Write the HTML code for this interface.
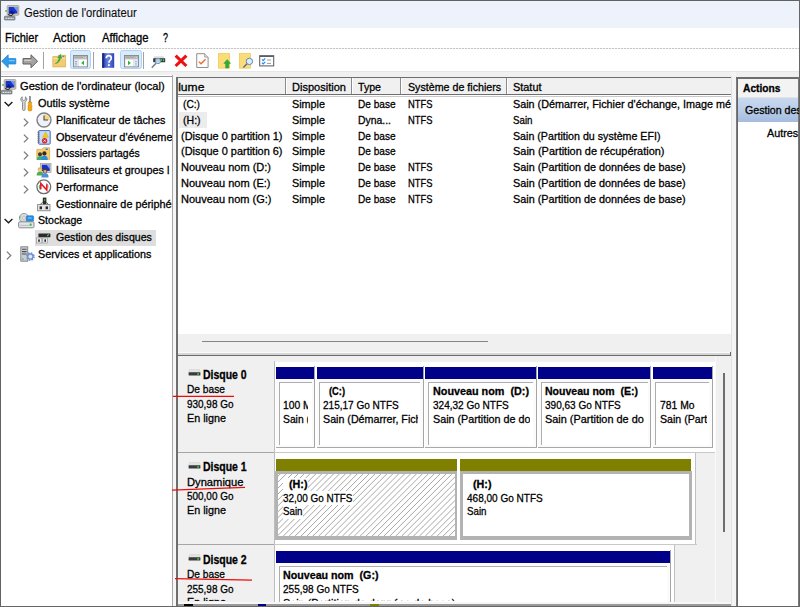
<!DOCTYPE html>
<html><head><meta charset="utf-8"><title>Gestion de l'ordinateur</title>
<style>
html,body{margin:0;padding:0;}
body{width:800px;height:607px;overflow:hidden;position:relative;background:#fff;font-family:"Liberation Sans",sans-serif;font-size:11.5px;line-height:14px;color:#000;}
.b{position:absolute;}
.c{position:absolute;overflow:hidden;}
.t{position:absolute;white-space:pre;transform-origin:0 0;-webkit-text-stroke:0.3px #000;}
svg{position:absolute;overflow:visible;}
</style></head><body>
<div class='b' style='left:0.00px;top:0.00px;width:800.00px;height:27.50px;background:#eef3fb;'></div>
<div class='b' style='left:0.00px;top:27.50px;width:800.00px;height:21.00px;background:#fff;'></div>
<div class='b' style='left:0.00px;top:48.30px;width:800.00px;height:1.00px;background:repeating-linear-gradient(90deg,#c6c6c6 0,#c6c6c6 2px,#f2f2f2 2px,#f2f2f2 3px);'></div>
<div class='b' style='left:0.00px;top:49.30px;width:800.00px;height:21.40px;background:#fff;'></div>
<div class='b' style='left:0.00px;top:70.70px;width:800.00px;height:1.10px;background:#e6e6e6;'></div>
<div class='b' style='left:0.00px;top:71.80px;width:800.00px;height:535.20px;background:#f0f0f0;'></div>
<div class='b' style='left:1.00px;top:75.30px;width:172.00px;height:530.70px;background:#fff;'></div>
<div class='b' style='left:1.00px;top:75.70px;width:172.00px;height:1.10px;background:#9497a0;'></div>
<div class='b' style='left:172.00px;top:75.30px;width:1.10px;height:530.70px;background:#a8a8a8;'></div>
<div class='b' style='left:173.10px;top:75.30px;width:2.90px;height:530.70px;background:#f6f6f6;'></div>
<div class='b' style='left:34.80px;top:229.50px;width:121.40px;height:16.20px;background:#dedede;'></div>
<div class='b' style='left:176.00px;top:76.60px;width:555.20px;height:529.40px;background:#fff;'></div>
<div class='b' style='left:176.00px;top:76.60px;width:555.20px;height:1.20px;background:#6e6e6e;'></div>
<div class='b' style='left:176.00px;top:76.60px;width:1.70px;height:529.40px;background:#6e6e6e;'></div>
<div class='b' style='left:177.70px;top:77.80px;width:553.50px;height:16.60px;background:#f0f0f0;'></div>
<div class='b' style='left:177.70px;top:94.40px;width:553.50px;height:1.10px;background:#6e6e6e;'></div>
<div class='b' style='left:177.70px;top:95.50px;width:553.50px;height:0.70px;background:#c8c8c8;'></div>
<div class='b' style='left:284.60px;top:78.20px;width:1.00px;height:16.00px;background:#8a8a8a;'></div>
<div class='b' style='left:285.60px;top:78.20px;width:1.00px;height:16.00px;background:#ffffff;'></div>
<div class='b' style='left:350.80px;top:78.20px;width:1.00px;height:16.00px;background:#8a8a8a;'></div>
<div class='b' style='left:351.80px;top:78.20px;width:1.00px;height:16.00px;background:#ffffff;'></div>
<div class='b' style='left:400.30px;top:78.20px;width:1.00px;height:16.00px;background:#8a8a8a;'></div>
<div class='b' style='left:401.30px;top:78.20px;width:1.00px;height:16.00px;background:#ffffff;'></div>
<div class='b' style='left:505.80px;top:78.20px;width:1.00px;height:16.00px;background:#8a8a8a;'></div>
<div class='b' style='left:506.80px;top:78.20px;width:1.00px;height:16.00px;background:#ffffff;'></div>
<div class='b' style='left:179.00px;top:112.00px;width:27.50px;height:15.60px;background:#ececec;'></div>
<div class='b' style='left:177.70px;top:334.00px;width:553.50px;height:18.00px;background:#f0f0f0;'></div>
<div class='b' style='left:202.00px;top:340.60px;width:285.50px;height:1.90px;background:#848484;'></div>
<div class='b' style='left:177.70px;top:352.00px;width:553.50px;height:1.30px;background:#fbfbfb;'></div>
<div class='b' style='left:177.70px;top:353.30px;width:553.50px;height:1.30px;background:#d6d6d6;'></div>
<div class='b' style='left:177.70px;top:355.00px;width:553.30px;height:1.40px;background:#6a6a6a;'></div>
<div class='b' style='left:729.80px;top:351.50px;width:1.20px;height:4.90px;background:#6a6a6a;'></div>
<div class='b' style='left:177.70px;top:356.40px;width:553.50px;height:249.60px;background:#f0f0f0;'></div>
<div class='b' style='left:722.80px;top:372.80px;width:1.80px;height:159.20px;background:#6e6e6e;'></div>
<div class='b' style='left:715.20px;top:357.00px;width:0.80px;height:245.00px;background:#fafafa;'></div>
<div class='b' style='left:731.20px;top:72.00px;width:4.80px;height:534.00px;background:#f4f4f4;'></div>
<div class='b' style='left:731.20px;top:76.00px;width:1.00px;height:530.00px;background:#e2e2e2;'></div>
<div class='b' style='left:736.00px;top:77.00px;width:1.80px;height:529.00px;background:#7c7c7c;'></div>
<div class='b' style='left:737.00px;top:77.00px;width:0.80px;height:529.00px;background:#666;'></div>
<div class='b' style='left:737.80px;top:77.00px;width:61.20px;height:529.00px;background:#fff;'></div>
<div class='b' style='left:736.00px;top:77.00px;width:63.00px;height:1.60px;background:#6e6e6e;'></div>
<div class='b' style='left:737.80px;top:78.60px;width:61.20px;height:18.40px;background:#f3f3f3;'></div>
<div class='b' style='left:737.80px;top:97.00px;width:61.20px;height:1.20px;background:#e4e4e4;'></div>
<div class='b' style='left:737.80px;top:98.40px;width:61.20px;height:23.20px;background:linear-gradient(#c9d8ef,#bccfea 45%,#a4bbe0);'></div>
<div class='b' style='left:275.00px;top:361.60px;width:440.00px;height:90.00px;background:#fff;'></div>
<div class='b' style='left:273.60px;top:361.30px;width:1.30px;height:90.30px;background:#bdbdbd;'></div>
<div class='b' style='left:276.00px;top:366.60px;width:38.00px;height:12.10px;background:#000088;'></div>
<div class='b' style='left:276.00px;top:378.70px;width:38.00px;height:68.90px;background:#fbfbfb;'></div>
<div class='b' style='left:278.60px;top:381.50px;width:33.00px;height:63.50px;background:#adadad;'></div>
<div class='b' style='left:279.70px;top:382.60px;width:31.90px;height:62.40px;background:#fff;'></div>
<div class='b' style='left:314.30px;top:365.60px;width:1.10px;height:82.00px;background:#a4a4a4;'></div>
<div class='b' style='left:276.00px;top:447.00px;width:39.40px;height:1.10px;background:#a9a9a9;'></div>
<div class='b' style='left:316.70px;top:366.60px;width:105.90px;height:12.10px;background:#000088;'></div>
<div class='b' style='left:316.70px;top:378.70px;width:105.90px;height:68.90px;background:#fbfbfb;'></div>
<div class='b' style='left:319.30px;top:381.50px;width:100.90px;height:63.50px;background:#adadad;'></div>
<div class='b' style='left:320.40px;top:382.60px;width:99.80px;height:62.40px;background:#fff;'></div>
<div class='b' style='left:422.90px;top:365.60px;width:1.10px;height:82.00px;background:#a4a4a4;'></div>
<div class='b' style='left:316.70px;top:447.00px;width:107.30px;height:1.10px;background:#a9a9a9;'></div>
<div class='b' style='left:425.40px;top:366.60px;width:110.20px;height:12.10px;background:#000088;'></div>
<div class='b' style='left:425.40px;top:378.70px;width:110.20px;height:68.90px;background:#fbfbfb;'></div>
<div class='b' style='left:428.00px;top:381.50px;width:105.20px;height:63.50px;background:#adadad;'></div>
<div class='b' style='left:429.10px;top:382.60px;width:104.10px;height:62.40px;background:#fff;'></div>
<div class='b' style='left:535.90px;top:365.60px;width:1.10px;height:82.00px;background:#a4a4a4;'></div>
<div class='b' style='left:425.40px;top:447.00px;width:111.60px;height:1.10px;background:#a9a9a9;'></div>
<div class='b' style='left:538.40px;top:366.60px;width:111.60px;height:12.10px;background:#000088;'></div>
<div class='b' style='left:538.40px;top:378.70px;width:111.60px;height:68.90px;background:#fbfbfb;'></div>
<div class='b' style='left:541.00px;top:381.50px;width:106.60px;height:63.50px;background:#adadad;'></div>
<div class='b' style='left:542.10px;top:382.60px;width:105.50px;height:62.40px;background:#fff;'></div>
<div class='b' style='left:650.30px;top:365.60px;width:1.10px;height:82.00px;background:#a4a4a4;'></div>
<div class='b' style='left:538.40px;top:447.00px;width:113.00px;height:1.10px;background:#a9a9a9;'></div>
<div class='b' style='left:652.60px;top:366.60px;width:59.00px;height:12.10px;background:#000088;'></div>
<div class='b' style='left:652.60px;top:378.70px;width:59.00px;height:68.90px;background:#fbfbfb;'></div>
<div class='b' style='left:655.20px;top:381.50px;width:54.00px;height:63.50px;background:#adadad;'></div>
<div class='b' style='left:656.30px;top:382.60px;width:52.90px;height:62.40px;background:#fff;'></div>
<div class='b' style='left:711.90px;top:365.60px;width:1.10px;height:82.00px;background:#a4a4a4;'></div>
<div class='b' style='left:652.60px;top:447.00px;width:60.40px;height:1.10px;background:#a9a9a9;'></div>
<div class='b' style='left:177.70px;top:451.60px;width:96.30px;height:1.20px;background:#a6a6a6;'></div>
<div class='b' style='left:274.00px;top:451.60px;width:441.00px;height:1.20px;background:#c9c9c9;'></div>
<div class='b' style='left:275.00px;top:452.80px;width:421.00px;height:91.10px;background:#fff;'></div>
<div class='b' style='left:273.60px;top:452.50px;width:1.30px;height:91.40px;background:#bdbdbd;'></div>
<div class='b' style='left:276.00px;top:458.70px;width:181.20px;height:12.30px;background:#808000;'></div>
<div class='b' style='left:274.80px;top:471.00px;width:182.60px;height:68.60px;background:#b3b3b3;'></div>
<div class='b' style='left:277.90px;top:474.20px;width:176.70px;height:62.20px;background:#fff;'></div>
<svg style='left:277.90px;top:474.20px;overflow:hidden' width='176.70' height='62.20'><path d='M-60.00 62.20L2.20 0M-54.08 62.20L8.12 0M-48.16 62.20L14.04 0M-42.24 62.20L19.96 0M-36.32 62.20L25.88 0M-30.40 62.20L31.80 0M-24.48 62.20L37.72 0M-18.56 62.20L43.64 0M-12.64 62.20L49.56 0M-6.72 62.20L55.48 0M-0.80 62.20L61.40 0M5.12 62.20L67.32 0M11.04 62.20L73.24 0M16.96 62.20L79.16 0M22.88 62.20L85.08 0M28.80 62.20L91.00 0M34.72 62.20L96.92 0M40.64 62.20L102.84 0M46.56 62.20L108.76 0M52.48 62.20L114.68 0M58.40 62.20L120.60 0M64.32 62.20L126.52 0M70.24 62.20L132.44 0M76.16 62.20L138.36 0M82.08 62.20L144.28 0M88.00 62.20L150.20 0M93.92 62.20L156.12 0M99.84 62.20L162.04 0M105.76 62.20L167.96 0M111.68 62.20L173.88 0M117.60 62.20L179.80 0M123.52 62.20L185.72 0M129.44 62.20L191.64 0M135.36 62.20L197.56 0M141.28 62.20L203.48 0M147.20 62.20L209.40 0M153.12 62.20L215.32 0M159.04 62.20L221.24 0M164.96 62.20L227.16 0M170.88 62.20L233.08 0' stroke='#909090' stroke-width='0.8' fill='none'/></svg>
<div class='b' style='left:460.00px;top:458.70px;width:231.40px;height:12.30px;background:#808000;'></div>
<div class='b' style='left:460.00px;top:471.00px;width:231.60px;height:68.60px;background:#b3b3b3;'></div>
<div class='b' style='left:463.10px;top:474.20px;width:225.70px;height:62.20px;background:#fff;'></div>
<div class='b' style='left:695.40px;top:453.00px;width:1.10px;height:91.00px;background:#c0c0c0;'></div>
<div class='b' style='left:177.70px;top:543.90px;width:96.30px;height:1.20px;background:#a6a6a6;'></div>
<div class='b' style='left:274.00px;top:543.90px;width:422.50px;height:1.20px;background:#c9c9c9;'></div>
<div class='b' style='left:282.50px;top:477.60px;width:25.50px;height:13.80px;background:#fff;'></div>
<div class='b' style='left:282.50px;top:491.40px;width:70.50px;height:13.70px;background:#fff;'></div>
<div class='b' style='left:282.50px;top:505.10px;width:20.50px;height:13.70px;background:#fff;'></div>
<div class='b' style='left:275.00px;top:545.10px;width:399.00px;height:56.90px;background:#fff;'></div>
<div class='b' style='left:273.60px;top:544.80px;width:1.30px;height:57.20px;background:#bdbdbd;'></div>
<div class='b' style='left:276.00px;top:551.00px;width:393.60px;height:12.20px;background:#000088;'></div>
<div class='b' style='left:276.00px;top:563.20px;width:393.60px;height:76.80px;background:#fbfbfb;'></div>
<div class='b' style='left:278.60px;top:566.00px;width:388.60px;height:71.40px;background:#adadad;'></div>
<div class='b' style='left:279.70px;top:567.10px;width:387.50px;height:70.30px;background:#fff;'></div>
<div class='b' style='left:669.90px;top:550.00px;width:1.10px;height:90.00px;background:#a4a4a4;'></div>
<div class='b' style='left:276.00px;top:639.40px;width:395.00px;height:1.10px;background:#a9a9a9;'></div>
<div class='b' style='left:674.00px;top:545.20px;width:1.00px;height:56.80px;background:#c0c0c0;'></div>
<div class='b' style='left:177.70px;top:601.60px;width:553.50px;height:2.40px;background:#f7f7f7;'></div>
<div class='b' style='left:177.70px;top:604.00px;width:553.50px;height:2.00px;background:#9a9a9a;'></div>
<div class='b' style='left:184.00px;top:603.80px;width:8.50px;height:3.20px;background:#000;'></div>
<div class='b' style='left:257.50px;top:603.80px;width:8.50px;height:3.20px;background:#000088;'></div>
<div class='b' style='left:370.00px;top:603.80px;width:8.50px;height:3.20px;background:#808000;'></div>
<div class='b' style='left:798.20px;top:77.00px;width:0.80px;height:529.00px;background:#7a7a7a;'></div>
<div class='b' style='left:43.30px;top:51.80px;width:1.00px;height:17.20px;background:#a2a2a2;'></div>
<div class='b' style='left:93.30px;top:51.80px;width:1.00px;height:17.20px;background:#a2a2a2;'></div>
<div class='b' style='left:143.40px;top:51.80px;width:1.00px;height:17.20px;background:#a2a2a2;'></div>
<div class='b' style='left:70.00px;top:50.20px;width:21.20px;height:19.20px;background:#d9ecfc;border:1px solid #a9d3f8;border-radius:2.5px;box-sizing:border-box;'></div>
<div class='b' style='left:120.00px;top:50.20px;width:21.60px;height:19.20px;background:#d9ecfc;border:1px solid #a9d3f8;border-radius:2.5px;box-sizing:border-box;'></div>
<span class='t' style='left:24.30px;top:6.40px;transform:scaleX(0.9362);font-size:12px;-webkit-text-stroke-width:0.12px;color:#111;'>Gestion de l&#x27;ordinateur</span>
<span class='t' style='left:5.40px;top:30.65px;transform:scaleX(0.9190);font-size:12px;'>Fichier</span>
<span class='t' style='left:53.00px;top:30.65px;transform:scaleX(0.9742);font-size:12px;'>Action</span>
<span class='t' style='left:101.50px;top:30.65px;transform:scaleX(0.9332);font-size:12px;'>Affichage</span>
<span class='t' style='left:163.00px;top:30.65px;transform:scaleX(0.7477);font-size:12px;'>?</span>
<span class='t' style='left:20.40px;top:79.40px;transform:scaleX(0.9649);'>Gestion de l&#x27;ordinateur (local)</span>
<span class='t' style='left:38.20px;top:96.14px;transform:scaleX(0.9480);'>Outils système</span>
<span class='t' style='left:56.40px;top:112.88px;transform:scaleX(0.9393);'>Planificateur de tâches</span>
<div class='c' style='left:0.00px;top:0.00px;width:172.00px;height:607.00px;'><span class='t' style='left:56.40px;top:129.62px;transform:scaleX(0.9527);'>Observateur d&#x27;événements</span></div>
<span class='t' style='left:56.40px;top:146.36px;transform:scaleX(0.9020);'>Dossiers partagés</span>
<div class='c' style='left:0.00px;top:0.00px;width:172.00px;height:607.00px;'><span class='t' style='left:56.40px;top:163.10px;transform:scaleX(0.9428);'>Utilisateurs et groupes l</span></div>
<span class='t' style='left:56.40px;top:179.84px;transform:scaleX(0.9447);'>Performance</span>
<div class='c' style='left:0.00px;top:0.00px;width:172.00px;height:607.00px;'><span class='t' style='left:56.40px;top:196.58px;transform:scaleX(0.9411);'>Gestionnaire de périphériques</span></div>
<span class='t' style='left:38.20px;top:213.32px;transform:scaleX(0.9217);'>Stockage</span>
<span class='t' style='left:56.40px;top:230.06px;transform:scaleX(0.9194);'>Gestion des disques</span>
<span class='t' style='left:38.20px;top:246.80px;transform:scaleX(0.9386);'>Services et applications</span>
<div class='c' style='left:178.00px;top:0.00px;width:107.00px;height:607.00px;'><span class='t' style='left:-13.80px;top:80.00px;transform:scaleX(1.0532);'>Volume</span></div>
<span class='t' style='left:292.00px;top:80.00px;transform:scaleX(0.9600);'>Disposition</span>
<span class='t' style='left:358.00px;top:80.00px;transform:scaleX(0.9223);'>Type</span>
<span class='t' style='left:407.50px;top:80.00px;transform:scaleX(0.9277);'>Système de fichiers</span>
<span class='t' style='left:512.50px;top:80.00px;transform:scaleX(0.9480);'>Statut</span>
<span class='t' style='left:183.00px;top:96.90px;transform:scaleX(0.8867);'>(C:)</span>
<span class='t' style='left:292.00px;top:96.90px;transform:scaleX(0.9387);'>Simple</span>
<span class='t' style='left:358.00px;top:96.90px;transform:scaleX(0.8776);'>De base</span>
<span class='t' style='left:407.50px;top:96.90px;transform:scaleX(0.8158);'>NTFS</span>
<div class='c' style='left:0.00px;top:0.00px;width:731.20px;height:607.00px;'><span class='t' style='left:512.50px;top:96.90px;transform:scaleX(0.9389);'>Sain (Démarrer, Fichier d&#x27;échange, Image mémoire)</span></div>
<span class='t' style='left:183.00px;top:112.75px;transform:scaleX(0.9180);'>(H:)</span>
<span class='t' style='left:292.00px;top:112.75px;transform:scaleX(0.9387);'>Simple</span>
<span class='t' style='left:358.00px;top:112.75px;transform:scaleX(0.9057);'>Dyna...</span>
<span class='t' style='left:407.50px;top:112.75px;transform:scaleX(0.8158);'>NTFS</span>
<span class='t' style='left:512.50px;top:112.75px;transform:scaleX(0.8467);'>Sain</span>
<span class='t' style='left:180.50px;top:128.60px;transform:scaleX(0.9508);'>(Disque 0 partition 1)</span>
<span class='t' style='left:292.00px;top:128.60px;transform:scaleX(0.9387);'>Simple</span>
<span class='t' style='left:358.00px;top:128.60px;transform:scaleX(0.8776);'>De base</span>
<span class='t' style='left:512.50px;top:128.60px;transform:scaleX(0.9268);'>Sain (Partition du système EFI)</span>
<span class='t' style='left:180.50px;top:144.45px;transform:scaleX(0.9508);'>(Disque 0 partition 6)</span>
<span class='t' style='left:292.00px;top:144.45px;transform:scaleX(0.9387);'>Simple</span>
<span class='t' style='left:358.00px;top:144.45px;transform:scaleX(0.8776);'>De base</span>
<span class='t' style='left:512.50px;top:144.45px;transform:scaleX(0.9518);'>Sain (Partition de récupération)</span>
<span class='t' style='left:180.50px;top:160.30px;transform:scaleX(0.9578);'>Nouveau nom (D:)</span>
<span class='t' style='left:292.00px;top:160.30px;transform:scaleX(0.9387);'>Simple</span>
<span class='t' style='left:358.00px;top:160.30px;transform:scaleX(0.8776);'>De base</span>
<span class='t' style='left:407.50px;top:160.30px;transform:scaleX(0.8158);'>NTFS</span>
<span class='t' style='left:512.50px;top:160.30px;transform:scaleX(0.9401);'>Sain (Partition de données de base)</span>
<span class='t' style='left:180.50px;top:176.15px;transform:scaleX(0.9590);'>Nouveau nom (E:)</span>
<span class='t' style='left:292.00px;top:176.15px;transform:scaleX(0.9387);'>Simple</span>
<span class='t' style='left:358.00px;top:176.15px;transform:scaleX(0.8776);'>De base</span>
<span class='t' style='left:407.50px;top:176.15px;transform:scaleX(0.8158);'>NTFS</span>
<span class='t' style='left:512.50px;top:176.15px;transform:scaleX(0.9401);'>Sain (Partition de données de base)</span>
<span class='t' style='left:180.50px;top:192.00px;transform:scaleX(0.9566);'>Nouveau nom (G:)</span>
<span class='t' style='left:292.00px;top:192.00px;transform:scaleX(0.9387);'>Simple</span>
<span class='t' style='left:358.00px;top:192.00px;transform:scaleX(0.8776);'>De base</span>
<span class='t' style='left:407.50px;top:192.00px;transform:scaleX(0.8158);'>NTFS</span>
<span class='t' style='left:512.50px;top:192.00px;transform:scaleX(0.9401);'>Sain (Partition de données de base)</span>
<span class='t' style='left:742.50px;top:80.65px;transform:scaleX(0.8892);font-weight:bold;'>Actions</span>
<div class='c' style='left:0.00px;top:0.00px;width:799.00px;height:607.00px;'><span class='t' style='left:744.50px;top:103.15px;transform:scaleX(0.9235);'>Gestion des disques</span></div>
<div class='c' style='left:0.00px;top:0.00px;width:799.00px;height:607.00px;'><span class='t' style='left:767.00px;top:125.90px;transform:scaleX(0.9391);'>Autres actions</span></div>
<span class='t' style='left:203.30px;top:367.95px;transform:scaleX(0.8324);font-size:12.6px;font-weight:bold;'>Disque 0</span>
<span class='t' style='left:186.50px;top:382.40px;transform:scaleX(0.8869);'>De base</span>
<span class='t' style='left:186.50px;top:396.75px;transform:scaleX(0.8656);'>930,98 Go</span>
<div class='c' style='left:0.00px;top:0.00px;width:800.00px;height:601.40px;'><span class='t' style='left:186.50px;top:410.55px;transform:scaleX(0.9383);'>En ligne</span></div>
<span class='t' style='left:203.30px;top:460.20px;transform:scaleX(0.8324);font-size:12.6px;font-weight:bold;'>Disque 1</span>
<span class='t' style='left:186.50px;top:474.65px;transform:scaleX(0.9713);'>Dynamique</span>
<span class='t' style='left:186.50px;top:489.00px;transform:scaleX(0.8656);'>500,00 Go</span>
<div class='c' style='left:0.00px;top:0.00px;width:800.00px;height:601.40px;'><span class='t' style='left:186.50px;top:502.80px;transform:scaleX(0.9383);'>En ligne</span></div>
<span class='t' style='left:203.30px;top:552.80px;transform:scaleX(0.8324);font-size:12.6px;font-weight:bold;'>Disque 2</span>
<span class='t' style='left:186.50px;top:567.25px;transform:scaleX(0.8869);'>De base</span>
<span class='t' style='left:186.50px;top:581.60px;transform:scaleX(0.8656);'>255,98 Go</span>
<div class='c' style='left:0.00px;top:0.00px;width:800.00px;height:601.40px;'><span class='t' style='left:186.50px;top:595.40px;transform:scaleX(0.9383);'>En ligne</span></div>
<div class='c' style='left:0.00px;top:0.00px;width:308.30px;height:607.00px;'><span class='t' style='left:282.50px;top:398.15px;transform:scaleX(0.8974);'>100 Mo</span></div>
<div class='c' style='left:0.00px;top:0.00px;width:308.30px;height:607.00px;'><span class='t' style='left:282.50px;top:412.40px;transform:scaleX(0.8974);'>Sain (Partition</span></div>
<span class='t' style='left:329.00px;top:384.40px;transform:scaleX(0.8082);font-weight:bold;'>(C:)</span>
<span class='t' style='left:323.00px;top:398.15px;transform:scaleX(0.8713);'>215,17 Go NTFS</span>
<div class='c' style='left:0.00px;top:0.00px;width:417.70px;height:607.00px;'><span class='t' style='left:323.00px;top:412.40px;transform:scaleX(0.9289);'>Sain (Démarrer, Fichier</span></div>
<span class='t' style='left:432.50px;top:384.40px;transform:scaleX(0.9390);font-weight:bold;'>Nouveau nom  (D:)</span>
<span class='t' style='left:432.50px;top:398.15px;transform:scaleX(0.8713);'>324,32 Go NTFS</span>
<div class='c' style='left:0.00px;top:0.00px;width:530.20px;height:607.00px;'><span class='t' style='left:432.50px;top:412.40px;transform:scaleX(0.9355);'>Sain (Partition de données</span></div>
<span class='t' style='left:545.00px;top:384.40px;transform:scaleX(0.9154);font-weight:bold;'>Nouveau nom  (E:)</span>
<span class='t' style='left:545.00px;top:398.15px;transform:scaleX(0.8713);'>390,63 Go NTFS</span>
<div class='c' style='left:0.00px;top:0.00px;width:644.30px;height:607.00px;'><span class='t' style='left:545.00px;top:412.40px;transform:scaleX(0.9481);'>Sain (Partition de données</span></div>
<span class='t' style='left:660.00px;top:398.15px;transform:scaleX(0.8994);'>781 Mo</span>
<div class='c' style='left:0.00px;top:0.00px;width:707.00px;height:607.00px;'><span class='t' style='left:660.00px;top:412.40px;transform:scaleX(0.9235);'>Sain (Partition</span></div>
<span class='t' style='left:288.50px;top:476.90px;transform:scaleX(0.9345);font-weight:bold;'>(H:)</span>
<span class='t' style='left:282.50px;top:490.65px;transform:scaleX(0.8629);'>32,00 Go NTFS</span>
<span class='t' style='left:282.50px;top:504.40px;transform:scaleX(0.8467);'>Sain</span>
<span class='t' style='left:472.50px;top:476.90px;transform:scaleX(0.9345);font-weight:bold;'>(H:)</span>
<span class='t' style='left:466.50px;top:490.65px;transform:scaleX(0.8713);'>468,00 Go NTFS</span>
<span class='t' style='left:466.50px;top:504.40px;transform:scaleX(0.8467);'>Sain</span>
<span class='t' style='left:282.50px;top:568.40px;transform:scaleX(0.9287);font-weight:bold;'>Nouveau nom  (G:)</span>
<span class='t' style='left:282.50px;top:582.40px;transform:scaleX(0.8713);'>255,98 Go NTFS</span>
<div class='c' style='left:0.00px;top:0.00px;width:800.00px;height:601.40px;'><span class='t' style='left:282.50px;top:596.40px;transform:scaleX(0.9391);'>Sain (Partition de données de base)</span></div>
<div class='b' style='left:0;top:0;width:800px;height:1px;background:#5b6363'></div>
<div class='b' style='left:0;top:0;width:1px;height:607px;background:#5f6363'></div>
<div class='b' style='left:799px;top:0;width:1px;height:607px;background:#666'></div>
<div class='b' style='left:0;top:605.8px;width:800px;height:1.2px;background:#666'></div>
<svg style='left:0;top:0' width='800' height='607'><line x1='173.0' y1='396.3' x2='234.0' y2='396.3' stroke='#ee0a0a' stroke-width='1.2'/></svg>
<svg style='left:0;top:0' width='800' height='607'><line x1='172.0' y1='490.2' x2='245.0' y2='487.3' stroke='#ee0a0a' stroke-width='1.2'/></svg>
<svg style='left:0;top:0' width='800' height='607'><line x1='175.0' y1='578.7' x2='252.0' y2='580.2' stroke='#ee0a0a' stroke-width='1.2'/></svg>
<svg style='left:3.60px;top:5.20px' width='16' height='16' viewBox='0 0 16 16'><rect x='3.2' y='0.6' width='11.6' height='9.6' rx='0.8' fill='#d9d2bd' stroke='#8f8c80' stroke-width='0.7'/><rect x='4.6' y='1.9' width='8.8' height='6.6' fill='#1b35c8'/><path d='M9.5 1.9h3.9v5.2z' fill='#6f9cf0'/><path d='M4.6 8.5l3-3.2 1.6 1.6 1.2-1v3z' fill='#0a1a8c'/><rect x='1.2' y='5.2' width='1.6' height='1.6' fill='#35c040'/><path d='M4.2 9.2l3.2 2.2M9 9.2l-2.4 2.2' stroke='#333' stroke-width='1.1'/><rect x='0.4' y='11.2' width='10.6' height='3.8' rx='0.6' fill='#8d969c' stroke='#5c6468' stroke-width='0.6'/><path d='M1.6 13.4h1.6M4 13.4h1.6M6.4 13.4h1.6M8.6 13.4h1.2' stroke='#e8ecef' stroke-width='1'/></svg>
<svg style='left:1.20px;top:78.60px' width='16' height='16' viewBox='0 0 16 16'><rect x='3.2' y='0.6' width='11.6' height='9.6' rx='0.8' fill='#d9d2bd' stroke='#8f8c80' stroke-width='0.7'/><rect x='4.6' y='1.9' width='8.8' height='6.6' fill='#1b35c8'/><path d='M9.5 1.9h3.9v5.2z' fill='#6f9cf0'/><path d='M4.6 8.5l3-3.2 1.6 1.6 1.2-1v3z' fill='#0a1a8c'/><rect x='1.2' y='5.2' width='1.6' height='1.6' fill='#35c040'/><path d='M4.2 9.2l3.2 2.2M9 9.2l-2.4 2.2' stroke='#333' stroke-width='1.1'/><rect x='0.4' y='11.2' width='10.6' height='3.8' rx='0.6' fill='#8d969c' stroke='#5c6468' stroke-width='0.6'/><path d='M1.6 13.4h1.6M4 13.4h1.6M6.4 13.4h1.6M8.6 13.4h1.2' stroke='#e8ecef' stroke-width='1'/></svg>
<svg style='left:3.60px;top:101.20px' width='9' height='6' viewBox='0 0 9 6'><path d='M0.6 0.9L4.5 4.8L8.4 0.9' fill='none' stroke='#1a1a1a' stroke-width='1.35'/></svg>
<svg style='left:3.60px;top:218.20px' width='9' height='6' viewBox='0 0 9 6'><path d='M0.6 0.9L4.5 4.8L8.4 0.9' fill='none' stroke='#1a1a1a' stroke-width='1.35'/></svg>
<svg style='left:22.90px;top:117.58px' width='6' height='9' viewBox='0 0 6 9'><path d='M0.9 0.6L4.8 4.5L0.9 8.4' fill='none' stroke='#7c7c7c' stroke-width='1.25'/></svg>
<svg style='left:22.90px;top:134.32px' width='6' height='9' viewBox='0 0 6 9'><path d='M0.9 0.6L4.8 4.5L0.9 8.4' fill='none' stroke='#7c7c7c' stroke-width='1.25'/></svg>
<svg style='left:22.90px;top:151.06px' width='6' height='9' viewBox='0 0 6 9'><path d='M0.9 0.6L4.8 4.5L0.9 8.4' fill='none' stroke='#7c7c7c' stroke-width='1.25'/></svg>
<svg style='left:22.90px;top:167.80px' width='6' height='9' viewBox='0 0 6 9'><path d='M0.9 0.6L4.8 4.5L0.9 8.4' fill='none' stroke='#7c7c7c' stroke-width='1.25'/></svg>
<svg style='left:22.90px;top:184.54px' width='6' height='9' viewBox='0 0 6 9'><path d='M0.9 0.6L4.8 4.5L0.9 8.4' fill='none' stroke='#7c7c7c' stroke-width='1.25'/></svg>
<svg style='left:5.60px;top:250.60px' width='6' height='9' viewBox='0 0 6 9'><path d='M0.9 0.6L4.8 4.5L0.9 8.4' fill='none' stroke='#7c7c7c' stroke-width='1.25'/></svg>
<svg style='left:19.50px;top:95.60px' width='13' height='16' viewBox='0 0 13 16'><path d='M2.2 0.8c-1.6 0.8-2 3-0.6 4.4l0.9 0.9v7.2c0 1.7 2.6 1.7 2.6 0v-7.2l0.9-0.9c1.4-1.4 1-3.6-0.6-4.4v2.8l-1.6 0.9-1.6-0.9z' fill='#d4d6d8' stroke='#77797c' stroke-width='0.8'/><rect x='9.2' y='0.4' width='1.5' height='5.6' fill='#9a9da0' stroke='#6d6f72' stroke-width='0.4'/><path d='M8.2 6h3.5v1.4l-0.6 0.7 0.8 0.9v5c0 1.4-3.9 1.4-3.9 0v-5l0.8-0.9-0.6-0.7z' fill='#f3a712' stroke='#c98206' stroke-width='0.5'/></svg>
<svg style='left:35.80px;top:112.20px' width='16' height='16' viewBox='0 0 16 16'><circle cx='8' cy='8' r='7' fill='#eef2f8' stroke='#7d7f83' stroke-width='1.4'/><path d='M8 8V2.2A5.8 5.8 0 0 1 13.8 8z' fill='#f7d67c'/><path d='M8 3.4V8H12' fill='none' stroke='#4a4a4a' stroke-width='1.1'/></svg>
<svg style='left:36.60px;top:129.60px' width='14' height='15' viewBox='0 0 14 15'><rect x='1.6' y='0.6' width='11.6' height='13.6' rx='0.8' fill='#c7dcf5' stroke='#4763c0' stroke-width='1'/><path d='M0.4 2.2h2.4M0.4 4.2h2.4M0.4 6.2h2.4M0.4 8.2h2.4M0.4 10.2h2.4M0.4 12.2h2.4' stroke='#6b6f78' stroke-width='0.9'/><path d='M8.6 2l2.9 5.2h-5.8z' fill='#f4d400' stroke='#b89c00' stroke-width='0.4'/><circle cx='7.6' cy='10.7' r='2.7' fill='#d8232a'/><path d='M6.6 9.7l2 2M8.6 9.7l-2 2' stroke='#fff' stroke-width='0.9'/></svg>
<svg style='left:35.60px;top:147.40px' width='15' height='14' viewBox='0 0 15 14'><path d='M0.8 2.4h5l1.4-1.6h6.4v11.6H0.8z' fill='#f3cf7a' stroke='#d9a63c' stroke-width='0.7'/><rect x='9.6' y='1.6' width='2.2' height='1.4' fill='#3a78e0'/><circle cx='4' cy='7.2' r='2' fill='#4a3524'/><path d='M0.8 13c0-3 1.4-4 3.2-4s3.2 1 3.2 4z' fill='#3fae7c'/><circle cx='8.4' cy='6.4' r='2.1' fill='#3a2a1c'/><path d='M5 13c0-3.2 1.5-4.4 3.4-4.4s3.4 1.2 3.4 4.4z' fill='#2f8fd6'/></svg>
<svg style='left:35.80px;top:163.00px' width='16' height='15' viewBox='0 0 16 15'><rect x='4.6' y='0.6' width='10.4' height='8.8' fill='#dcd6c4' stroke='#8d8a80' stroke-width='0.6'/><rect x='5.8' y='1.7' width='8' height='6.2' fill='#1732c4'/><path d='M10.5 1.7h3.3v4.4z' fill='#86aaf2'/><circle cx='4' cy='6.6' r='2.3' fill='#d9b46a'/><path d='M0.6 12.6c0-3 1.5-4 3.4-4s3.4 1 3.4 4z' fill='#4cae4c'/><circle cx='9' cy='7.8' r='2.4' fill='#5a3c22'/><path d='M5.4 14.4c0-3.2 1.6-4.4 3.6-4.4s3.6 1.2 3.6 4.4z' fill='#4f8fd8'/><circle cx='9' cy='8.4' r='1.4' fill='#e0b48a'/><circle cx='4' cy='7.2' r='1.3' fill='#eccfa6'/></svg>
<svg style='left:36.00px;top:179.00px' width='16' height='16' viewBox='0 0 16 16'><circle cx='7.8' cy='7.8' r='6.9' fill='#fff' stroke='#6f6f6f' stroke-width='1.3'/><path d='M4.2 10.6A4.6 4.6 0 0 1 5.2 4.4' fill='none' stroke='#3d9a46' stroke-width='1'/><path d='M10.4 4.2A4.6 4.6 0 0 1 12 9' fill='none' stroke='#9a9a9a' stroke-width='0.9'/><path d='M4.8 10.2V4.4L10.8 11V5.2' fill='none' stroke='#e8141c' stroke-width='1.5' stroke-linejoin='miter'/></svg>
<svg style='left:36.80px;top:197.00px' width='14' height='15' viewBox='0 0 14 15'><rect x='5.8' y='0.6' width='3.6' height='7' fill='#2b2b2b'/><rect x='7' y='2.2' width='1.3' height='1.6' fill='#2fd04a'/><path d='M3 7.6l2.8-2.4M11.4 7.6l-2-2.4' stroke='#555' stroke-width='0.9'/><rect x='0.6' y='7.6' width='12.4' height='6.2' fill='#e4e4e4' stroke='#7a7a7a' stroke-width='0.8'/><rect x='2.6' y='9.4' width='2.4' height='2.8' fill='#2a2a2a'/><rect x='8.6' y='9.4' width='2.4' height='2.8' fill='#2a2a2a'/></svg>
<svg style='left:18.20px;top:212.60px' width='17' height='16' viewBox='0 0 17 16'><circle cx='6' cy='5' r='4.6' fill='#d6d8db' stroke='#8a8d91' stroke-width='0.8'/><circle cx='6' cy='5' r='1.4' fill='#fff' stroke='#8a8d91' stroke-width='0.5'/><rect x='1.2' y='3.4' width='1.4' height='1.4' fill='#4cc04c'/><rect x='8.4' y='2.8' width='7.2' height='5.6' rx='1' fill='#2a8fe4' stroke='#1b6fc0' stroke-width='0.6'/><path d='M10 5h3.6' stroke='#9fd2ff' stroke-width='0.9'/><rect x='0.6' y='8.8' width='15.4' height='6' rx='1.2' fill='#e2e4e6' stroke='#7d8084' stroke-width='0.9'/><path d='M2 12.4h9' stroke='#b5b8bc' stroke-width='0.9'/><rect x='11.6' y='10.6' width='2' height='2.2' fill='#35b84a'/></svg>
<svg style='left:36.40px;top:233.20px' width='15' height='11' viewBox='0 0 15 11'><rect x='2.4' y='0.6' width='12' height='3.6' rx='0.5' fill='#2c2c2c'/><path d='M11.2 3l1.6-1.6' stroke='#39d455' stroke-width='1.1'/><rect x='0.6' y='5' width='5.2' height='5' fill='#efefef' stroke='#8a8a8a' stroke-width='0.6'/><rect x='6.8' y='5' width='4.6' height='5' fill='#efefef' stroke='#8a8a8a' stroke-width='0.6'/><rect x='2.2' y='6.4' width='1.6' height='2.4' fill='#2a2a2a'/><rect x='8.4' y='6.4' width='1.6' height='2.4' fill='#2a2a2a'/></svg>
<svg style='left:20.00px;top:246.40px' width='16' height='16' viewBox='0 0 16 16'><rect x='0.8' y='0.8' width='7' height='14.4' fill='#c9ccd0' stroke='#70747a' stroke-width='0.8'/><path d='M2 3.2h4.6M2 5.6h4.6M2 8h4.6' stroke='#4b4f55' stroke-width='1.1'/><rect x='2.2' y='12.4' width='1.4' height='1.4' fill='#39c04a'/><circle cx='10.4' cy='10.6' r='3.4' fill='none' stroke='#6f94cc' stroke-width='2' stroke-dasharray='1.5 1.17'/><circle cx='10.4' cy='10.6' r='2.6' fill='#dfe8f6' stroke='#6f94cc' stroke-width='1.3'/></svg>
<svg style='left:187.60px;top:369.40px' width='13' height='8' viewBox='0 0 13 8'><path d='M1.6 0.6h9.8l1 2.6H0.6z' fill='#e6e6e6' stroke='#c4c4c4' stroke-width='0.4'/><rect x='0.6' y='3.2' width='11.8' height='3.4' rx='0.5' fill='#3a3a3a'/><rect x='9.2' y='4.2' width='1.8' height='1.5' fill='#3fd050'/></svg>
<svg style='left:187.60px;top:461.60px' width='13' height='8' viewBox='0 0 13 8'><path d='M1.6 0.6h9.8l1 2.6H0.6z' fill='#e6e6e6' stroke='#c4c4c4' stroke-width='0.4'/><rect x='0.6' y='3.2' width='11.8' height='3.4' rx='0.5' fill='#3a3a3a'/><rect x='9.2' y='4.2' width='1.8' height='1.5' fill='#3fd050'/></svg>
<svg style='left:187.60px;top:554.20px' width='13' height='8' viewBox='0 0 13 8'><path d='M1.6 0.6h9.8l1 2.6H0.6z' fill='#e6e6e6' stroke='#c4c4c4' stroke-width='0.4'/><rect x='0.6' y='3.2' width='11.8' height='3.4' rx='0.5' fill='#3a3a3a'/><rect x='9.2' y='4.2' width='1.8' height='1.5' fill='#3fd050'/></svg>
<svg style='left:1.20px;top:53.60px' width='16' height='15' viewBox='0 0 16 15'><path d='M0.6 7.2L7.2 0.8v3.8h7.6v5.4H7.2v3.8z' fill='#2e9be8' stroke='#1c7fd0' stroke-width='0.7'/><path d='M8 6.6h5.6' stroke='#7cc4f6' stroke-width='1.3'/></svg>
<svg style='left:21.60px;top:53.60px' width='17' height='15' viewBox='0 0 17 15'><path d='M15.6 7.2L9 0.8v3.8H1v5.4H9v3.8z' fill='#a3a3a3' stroke='#5f5f5f' stroke-width='1'/><path d='M2.2 6.4h7' stroke='#d0d0d0' stroke-width='1.2'/></svg>
<svg style='left:51.60px;top:53.20px' width='15' height='15' viewBox='0 0 15 15'><path d='M0.8 3.6h4.4l1.2-1.3h7.2v11.6H0.8z' fill='#f2cb73' stroke='#d9a741' stroke-width='0.7'/><path d='M0.8 5.4h12.8' stroke='#f9e2a6' stroke-width='1'/><rect x='10.4' y='2.8' width='1.8' height='1.2' fill='#4a8ae0'/><path d='M3.2 10.6c2-0.6 3.4-2.6 4-6l-1.6 0.2 2.8-3.6 1.4 4.2-1.4-0.4c-0.4 3-2 5.4-5.2 5.6z' fill='#2fb536' stroke='#1f8f27' stroke-width='0.4'/></svg>
<svg style='left:73.40px;top:55.20px' width='15' height='12.4' viewBox='0 0 15 12.4'><rect x='0.5' y='0.5' width='14' height='11.4' fill='#d6d6d6' stroke='#868686' stroke-width='0.9'/><rect x='1.2' y='1.2' width='12.6' height='2.4' fill='#aaaaaa'/><path d='M10.4 2.4h0.9M12 2.4h0.9' stroke='#e6e6e6' stroke-width='0.9'/><rect x='1.4' y='4.6' width='3.4' height='6.6' fill='#e9eef6'/><path d='M3 6v1M3 7.8v1M3 9.6v1' stroke='#2f6fd0' stroke-width='1.1'/><rect x='5.6' y='4.6' width='8' height='6.6' fill='#fff'/><path d='M11 5.6L8.2 7.9L11 10.2z' fill='#2fb536'/></svg>
<svg style='left:124.00px;top:55.20px' width='15' height='12.4' viewBox='0 0 15 12.4'><rect x='0.5' y='0.5' width='14' height='11.4' fill='#d6d6d6' stroke='#868686' stroke-width='0.9'/><rect x='1.2' y='1.2' width='12.6' height='2.4' fill='#aaaaaa'/><path d='M10.4 2.4h0.9M12 2.4h0.9' stroke='#e6e6e6' stroke-width='0.9'/><rect x='10.2' y='4.6' width='3.4' height='6.6' fill='#e9eef6'/><path d='M12 6v1M12 7.8v1M12 9.6v1' stroke='#4f8fe0' stroke-width='1.1'/><rect x='1.4' y='4.6' width='8' height='6.6' fill='#fff'/><path d='M4 5.6L6.8 7.9L4 10.2z' fill='#2fb536'/></svg>
<svg style='left:102.30px;top:52.80px' width='12.4' height='15' viewBox='0 0 12.4 15'><defs><linearGradient id='hg' x1='0' x2='1'><stop offset='0' stop-color='#20369c'/><stop offset='0.5' stop-color='#6a86ea'/><stop offset='1' stop-color='#2a44b4'/></linearGradient></defs><rect x='0.2' y='0.2' width='12' height='14.6' fill='url(#hg)'/><rect x='0.2' y='0.2' width='2' height='14.6' fill='#1a2c86'/><path d='M4.3 5.2c0-3.4 5-3.4 5 0c0 2-2.4 2.2-2.4 4.6' fill='none' stroke='#fff' stroke-width='1.7'/><rect x='6' y='11.2' width='1.8' height='1.8' fill='#fff'/></svg>
<svg style='left:151.40px;top:54.60px' width='15' height='14' viewBox='0 0 15 14'><path d='M3.4 1.2h9l1 2H2.4z' fill='#d8dce2'/><rect x='2.2' y='3.2' width='12' height='4' rx='0.4' fill='#2e3338'/><rect x='10' y='4.2' width='1.2' height='2' fill='#3fd050'/><rect x='12' y='4.2' width='1.2' height='2' fill='#3fd050'/><circle cx='7' cy='6' r='2.7' fill='#cfe6f8' fill-opacity='0.85' stroke='#6a90b4' stroke-width='0.9'/><path d='M5 8.2L0.8 12.8' stroke='#6d7f8e' stroke-width='1.4'/></svg>
<svg style='left:173.80px;top:53.60px' width='14' height='13.4' viewBox='0 0 14 13.4'><path d='M1.6 1.6L12.4 12M12.4 1.6L1.6 12' stroke='#ee1111' stroke-width='3.1'/></svg>
<svg style='left:195.80px;top:52.80px' width='13' height='15.2' viewBox='0 0 13 15.2'><path d='M0.7 0.7h8l3.4 3.4v10.4H0.7z' fill='#fdfdfd' stroke='#8f8f8f' stroke-width='1'/><path d='M8.7 0.7v3.4h3.4' fill='#e4e4e4' stroke='#8f8f8f' stroke-width='0.8'/><path d='M2.8 8.6l2.2 2.2 4.6-4.6' fill='none' stroke='#f06a28' stroke-width='1.3'/></svg>
<svg style='left:217.80px;top:52.80px' width='13' height='15.6' viewBox='0 0 13 15.6'><rect x='0.4' y='0.4' width='11.2' height='14.8' fill='#fbdc7a' stroke='#f2c84c' stroke-width='0.7'/><path d='M9.2 6.6l3.4 3.8h-1.8v4.6H7.6v-4.6H5.8z' fill='#2cb034' stroke='#1d8f26' stroke-width='0.4'/></svg>
<svg style='left:238.80px;top:52.80px' width='14.4' height='15.6' viewBox='0 0 14.4 15.6'><rect x='0.4' y='0.4' width='11.2' height='14.8' fill='#fbdc7a' stroke='#f2c84c' stroke-width='0.7'/><circle cx='10.4' cy='8.4' r='3.2' fill='#dcecf8' stroke='#5f87b8' stroke-width='1'/><path d='M8 10.8L4.4 14.6' stroke='#5a6f86' stroke-width='1.4'/></svg>
<svg style='left:258.80px;top:54.80px' width='15.4' height='11.6' viewBox='0 0 15.4 11.6'><rect x='0.7' y='0.7' width='14' height='10.2' fill='#fff' stroke='#5a5e68' stroke-width='1.05'/><path d='M0.7 1.4h14' stroke='#5a5e68' stroke-width='1.2'/><path d='M3 4.4l1.2 1.2 2-2.2M3 7.8l1.2 1.2 2-2.2' fill='none' stroke='#2a8ae8' stroke-width='1.2'/><path d='M8 5h4M8 8.4h4' stroke='#9a9a9a' stroke-width='1'/></svg>
</body></html>
